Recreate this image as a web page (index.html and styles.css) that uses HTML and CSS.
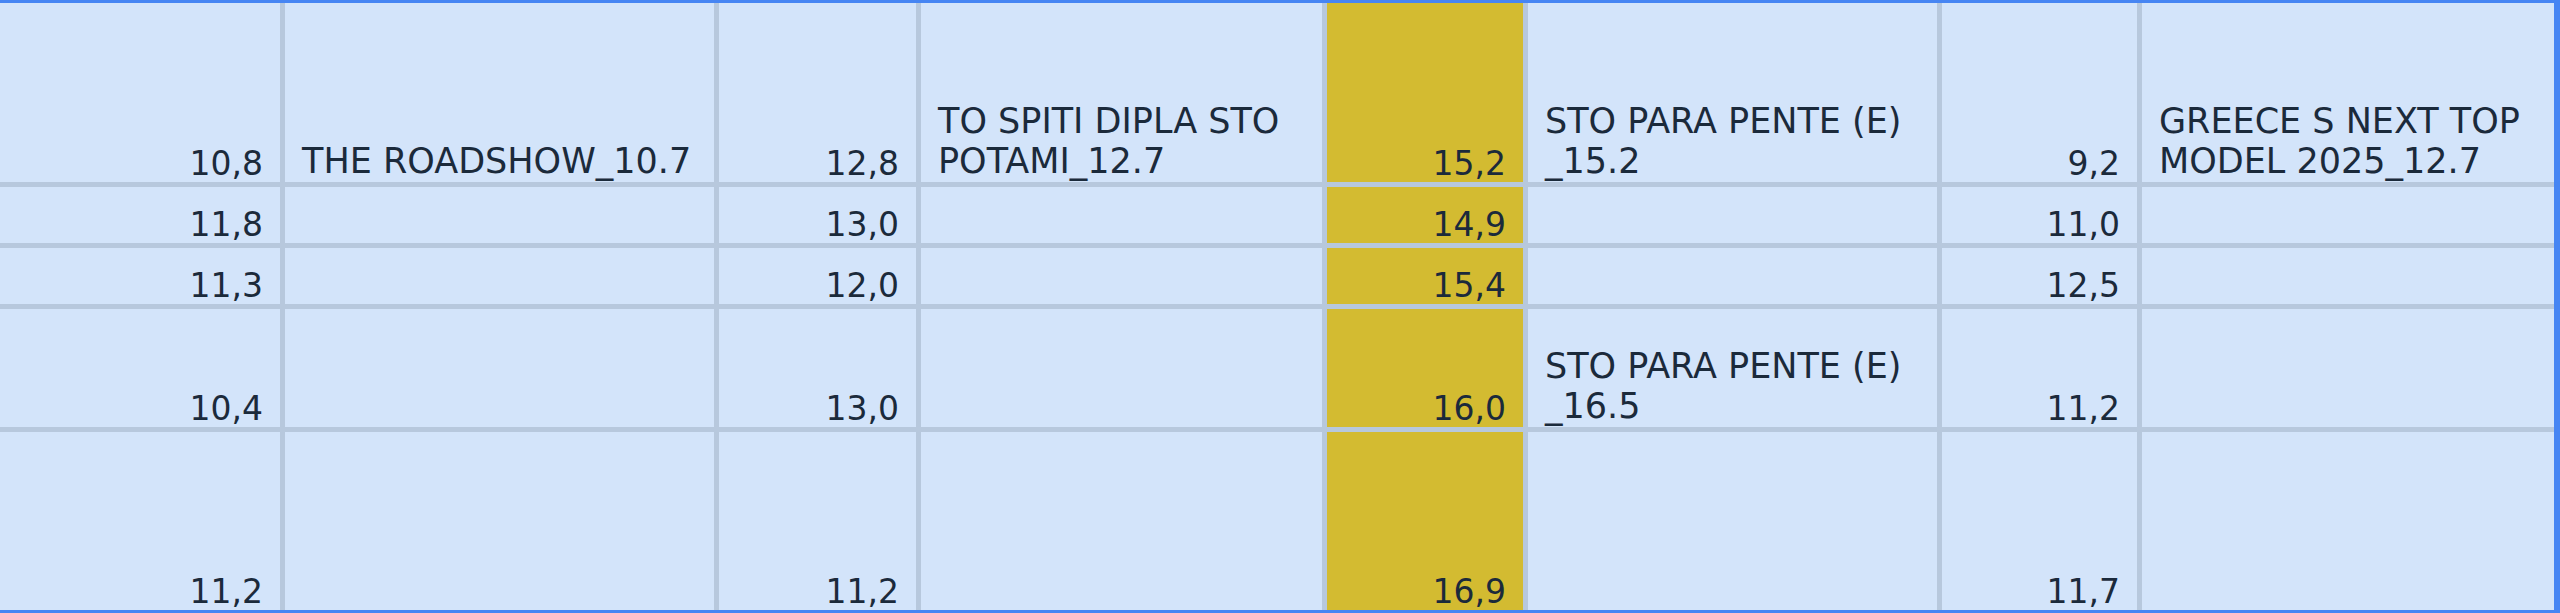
FILE: index.html
```html
<!DOCTYPE html>
<html>
<head>
<meta charset="utf-8">
<link rel="stylesheet" href="styles.css">
</head>
<body>
<div class="sheet">
  <div class="cell num">10,8</div>
  <div class="cell txt">THE ROADSHOW_10.7</div>
  <div class="cell num">12,8</div>
  <div class="cell txt">TO SPITI DIPLA STO POTAMI_12.7</div>
  <div class="cell num hl">15,2</div>
  <div class="cell txt">STO PARA PENTE (E)<wbr>_15.2</div>
  <div class="cell num">9,2</div>
  <div class="cell txt">GREECE S NEXT TOP MODEL 2025_12.7</div>

  <div class="cell num">11,8</div>
  <div class="cell txt"></div>
  <div class="cell num">13,0</div>
  <div class="cell txt"></div>
  <div class="cell num hl">14,9</div>
  <div class="cell txt"></div>
  <div class="cell num">11,0</div>
  <div class="cell txt"></div>

  <div class="cell num">11,3</div>
  <div class="cell txt"></div>
  <div class="cell num">12,0</div>
  <div class="cell txt"></div>
  <div class="cell num hl">15,4</div>
  <div class="cell txt"></div>
  <div class="cell num">12,5</div>
  <div class="cell txt"></div>

  <div class="cell num">10,4</div>
  <div class="cell txt"></div>
  <div class="cell num">13,0</div>
  <div class="cell txt"></div>
  <div class="cell num hl">16,0</div>
  <div class="cell txt">STO PARA PENTE (E)<wbr>_16.5</div>
  <div class="cell num">11,2</div>
  <div class="cell txt"></div>

  <div class="cell num">11,2</div>
  <div class="cell txt"></div>
  <div class="cell num">11,2</div>
  <div class="cell txt"></div>
  <div class="cell num hl">16,9</div>
  <div class="cell txt"></div>
  <div class="cell num">11,7</div>
  <div class="cell txt"></div>
</div>
</body>
</html>
```

FILE: styles.css
```css
html, body {
  margin: 0;
  padding: 0;
  background: #d3e4fa;
}

.sheet {
  display: grid;
  grid-template-columns: 280px 429px 197px 401px 196px 409px 195px 412px;
  grid-template-rows: 179px 56px 56px 118px 178px;
  gap: 5px;
  width: 2554px;
  background: #b7c8dd;
  border-top: 3px solid #4685f3;
  border-bottom: 3px solid #4685f3;
  border-right: 6px solid #4685f3;
  font-family: "DejaVu Sans", Verdana, sans-serif;
  color: #1b2a3b;
}

.cell {
  background: #d3e4fa;
  display: flex;
  flex-direction: column;
  justify-content: flex-end;
  overflow: hidden;
}

.num {
  font-size: 33px;
  line-height: 36px;
  text-align: right;
  padding: 0 17px 0 8px;
}

.txt {
  font-size: 35px;
  line-height: 40px;
  text-align: left;
  padding: 0 4px 1px 17px;
}

.hl {
  background: #d3bb31;
}
```
